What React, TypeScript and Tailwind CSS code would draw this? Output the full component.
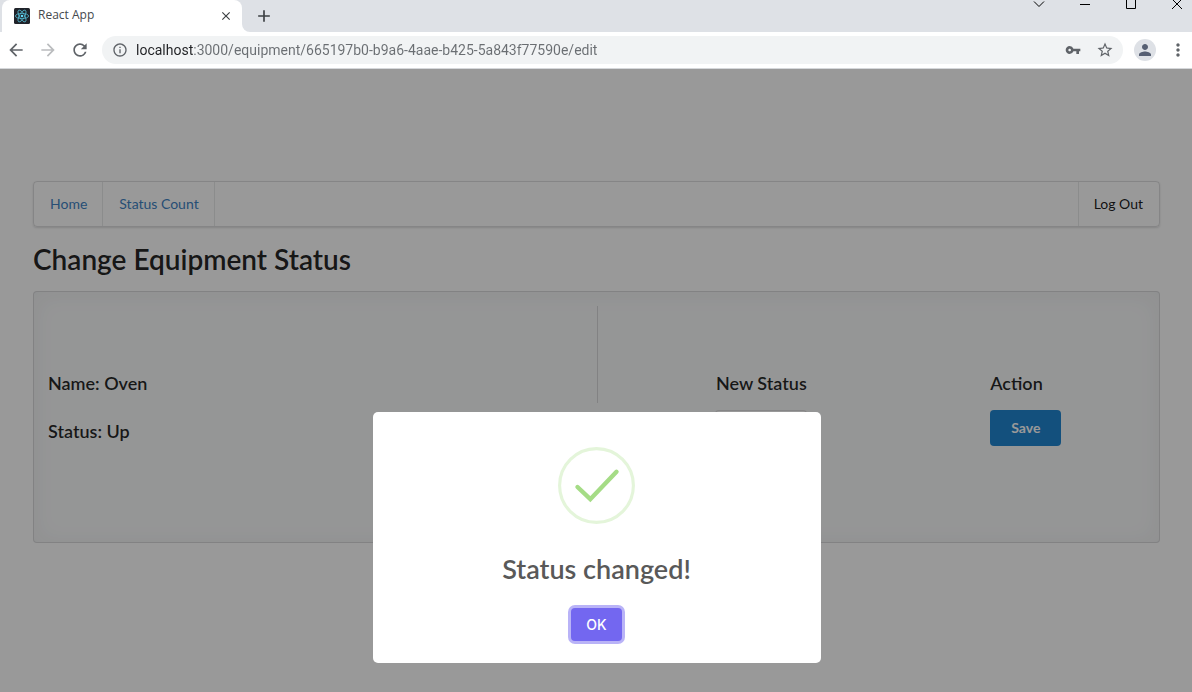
import type { ReactNode } from "react";
import { MdArrowBack, MdArrowForward, MdRefresh, MdInfoOutline, MdVpnKey, MdStarBorder, MdPerson, MdMoreVert, MdClose, MdAdd } from "react-icons/md";

function IconButton({ label, className = "", children }: { label: string; className?: string; children: ReactNode }) {
  return (
    <button type="button" aria-label={label} className={`flex items-center justify-center ${className}`}>
      {children}
    </button>
  );
}

function ReactLogo() {
  return (
    <svg viewBox="0 0 16 16" className="size-4" aria-hidden="true">
      <rect width="16" height="16" rx="1.5" fill="#20232a" />
      <g fill="none" stroke="#53b9d1" strokeWidth="0.8">
        <ellipse cx="8" cy="8" rx="6.6" ry="2.6" />
        <ellipse cx="8" cy="8" rx="6.6" ry="2.6" transform="rotate(60 8 8)" />
        <ellipse cx="8" cy="8" rx="6.6" ry="2.6" transform="rotate(120 8 8)" />
      </g>
      <circle cx="8" cy="8" r="1.3" fill="#61dafb" />
    </svg>
  );
}

function TabStrip() {
  return (
    <div className="flex h-8 items-stretch bg-[#dee1e6] pl-0.5">
      <div className="flex w-60 items-center rounded-t-lg bg-white pr-2 pl-3">
        <ReactLogo />
        <span className="ml-2 flex-1 pb-0.5 text-xs text-[#45494d]">React App</span>
        <IconButton label="Close tab" className="size-4 text-[#3c4043]">
          <MdClose size={14} />
        </IconButton>
      </div>
      <div className="flex size-8 bg-white">
        <IconButton label="New tab" className="mr-auto h-8 w-11 shrink-0 rounded-bl-lg bg-[#dee1e6] text-[#3c4043]">
          <MdAdd size={20} />
        </IconButton>
      </div>
      <div className="-mr-2 ml-auto flex items-start text-black">
        <IconButton label="Search tabs" className="h-3 w-[46px]">
          <svg width="12" height="12" viewBox="0 0 12 12" fill="none" stroke="currentColor"><path d="M1 1.5 6 6.5l5-5" /></svg>
        </IconButton>
        <IconButton label="Minimize" className="h-3 w-[46px]">
          <svg width="12" height="12" viewBox="0 0 12 12" fill="none" stroke="currentColor"><path d="M1 4.5h10" /></svg>
        </IconButton>
        <IconButton label="Maximize" className="h-3 w-[46px]">
          <svg width="12" height="12" viewBox="0 0 12 12" fill="none" stroke="currentColor"><path d="M1.500-1.500h9v10h-9z" /></svg>
        </IconButton>
        <IconButton label="Close window" className="h-3 w-[46px]">
          <svg width="12" height="12" viewBox="0 0 12 12" fill="none" stroke="currentColor"><path d="m1-1 10 10M11-1 1 9" /></svg>
        </IconButton>
      </div>
    </div>
  );
}

function Toolbar() {
  return (
    <div className="flex h-[37px] items-center border-b border-[#d5d7da] bg-white pr-1 text-[#5f6368]">
      <IconButton label="Back" className="size-8">
        <MdArrowBack size={20} />
      </IconButton>
      <IconButton label="Forward" className="size-8 text-[#babcbe]">
        <MdArrowForward size={20} />
      </IconButton>
      <IconButton label="Reload" className="size-8">
        <MdRefresh size={20} />
      </IconButton>
      <div className="ml-1.5 flex h-7 flex-1 items-center rounded-full bg-[#f1f3f4] px-2.5">
        <MdInfoOutline size={16} />
        <input
          aria-label="Address"
          defaultValue="localhost:3000/equipment/665197b0-b9a6-4aae-b425-5a843f77590e/edit"
          className="ml-2 min-w-0 flex-1 bg-[linear-gradient(to_right,#202124_57px,#6a6e72_57px)] bg-clip-text font-[Roboto,sans-serif] text-sm text-transparent caret-black outline-none"
        />
        <IconButton label="Passwords" className="size-4">
          <MdVpnKey size={16} />
        </IconButton>
        <IconButton label="Bookmark" className="ml-4 size-4">
          <MdStarBorder size={18} className="shrink-0" />
        </IconButton>
      </div>
      <IconButton label="Profile" className="ml-[11px] size-[22px] rounded-full bg-[#dee1e6] text-[#565f73]">
        <MdPerson size={18} />
      </IconButton>
      <IconButton label="Menu" className="ml-3 size-5">
        <MdMoreVert size={20} />
      </IconButton>
    </div>
  );
}

function NavBar() {
  return (
    <nav className="flex h-[46px] items-stretch rounded border border-[#22242626] text-sm shadow-[0_1px_2px_0_#22242626]">
      <a href="#home" className="flex items-center border-r border-[#2224261a] pr-[15px] pl-4 text-[#4183c4]">Home</a>
      <a href="#status" className="flex items-center border-r border-[#2224261a] pr-[15px] pl-4 text-[#4183c4]">Status Count</a>
      <a href="#logout" className="ml-auto flex items-center border-l border-[#2224261a] pr-4 pl-[15px] text-black/90">Log Out</a>
    </nav>
  );
}

function EquipmentPanel() {
  return (
    <section className="mt-4 grid min-h-[252px] grid-cols-2 rounded border border-[#22242626] bg-[#f9fafb] p-3.5 text-lg leading-6 font-semibold text-black/85 shadow-[inset_0_2px_25px_0_#2224260d]">
      <div className="flex flex-col gap-6 pt-[65px]">
        <h3>Name: Oven</h3>
        <h3>Status: Up</h3>
      </div>
      <div className="flex">
        <div className="flex flex-col justify-between">
          <div className="h-[97px] w-px bg-[#22242626]" />
          <div className="h-[97px] w-px bg-[#22242626]" />
        </div>
        <div className="grid flex-1 grid-cols-2 pt-[65px]">
          <div className="flex flex-col items-center gap-[15px]">
            <label htmlFor="new-status" className="ml-[54px]">New Status</label>
            <select id="new-status" className="ml-[54px] h-9 w-[92px] rounded border border-[#22242626] bg-white px-2 text-sm font-normal">
              <option>Up</option>
              <option>Down</option>
            </select>
          </div>
          <div className="flex flex-col items-start gap-[15px] pl-[119px]">
            <h3>Action</h3>
            <button type="button" className="h-9 rounded bg-[#2185d0] px-[21px] text-sm font-bold text-white">Save</button>
          </div>
        </div>
      </div>
    </section>
  );
}

function SuccessDialog() {
  return (
    <div className="absolute inset-0 flex items-start justify-center bg-black/40 pt-[343px] pl-px">
      <div role="alertdialog" aria-labelledby="dialog-title" className="flex w-[448px] flex-col items-center rounded-[5px] bg-white pt-[35px] pb-[22px]">
        <svg viewBox="0 0 77 77" className="size-[77px]" fill="none" aria-hidden="true">
          <circle cx="38.500" cy="38.500" r="36.900" stroke="#e4f5da" strokeWidth="3.100" />
          <path d="M19.500 40 32.300 52.200 58.500 24.800" stroke="#a5dc86" strokeWidth="4.400" strokeLinecap="round" strokeLinejoin="miter" />
        </svg>
        <h2 id="dialog-title" className="mt-[27px] text-[27px] leading-9 font-semibold text-[#595959]">Status changed!</h2>
        <button type="button" className="mt-[21px] h-[33px] rounded bg-[#7367f0] px-[15px] pt-px font-[Inter,sans-serif] text-sm font-medium text-white ring-3 ring-[#b9b3f7]">
          OK
        </button>
      </div>
    </div>
  );
}

export default function App() {
  return (
    <div className="flex min-h-screen flex-col overflow-hidden">
      <header className="font-['Open_Sans',sans-serif]">
        <TabStrip />
        <Toolbar />
      </header>
      <div className="relative flex-1 bg-white font-[Lato,sans-serif]">
        <main className="pt-28 pr-8 pl-[33px]">
          <NavBar />
          <h1 className="mt-4 text-[28px] leading-8 font-semibold text-black/87">Change Equipment Status</h1>
          <EquipmentPanel />
        </main>
        <SuccessDialog />
      </div>
    </div>
  );
}
